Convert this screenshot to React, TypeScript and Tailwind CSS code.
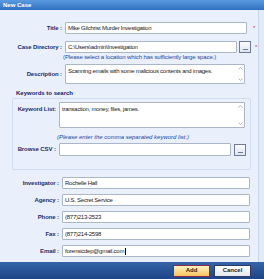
import React from 'react';

const label = 'text-right font-bold text-[6px] text-[#1c2d6e] pr-[2px] tracking-[-0.1px]';
const box = 'bg-white border border-[#a9b7c9] rounded-[1px] text-[6px] text-[#222] px-[2px] flex items-center tracking-[-0.25px]';

function Dots({ cls }: { cls: string }) {
  return (
    <div className={`${cls} w-[12px] h-[12px] bg-gradient-to-b from-[#fbfcfe] to-[#dde5f0] border border-[#6d7c94] flex items-end justify-center pb-[2px]`}>
      <span className="block w-[5px] h-px bg-[#6d7c94]" />
    </div>
  );
}

function Scroll() {
  return (
    <div className="w-[7px] self-stretch flex flex-col justify-between items-center py-[2px] text-[#9aa6b8]">
      <svg width="5" height="3" viewBox="0 0 5 3"><path d="M0.5 2.5 L2.5 0.5 L4.5 2.5" fill="none" stroke="currentColor" strokeWidth="0.8" /></svg>
      <svg width="5" height="3" viewBox="0 0 5 3"><path d="M0.5 0.5 L2.5 2.5 L4.5 0.5" fill="none" stroke="currentColor" strokeWidth="0.8" /></svg>
    </div>
  );
}

function Row({ name, value, active }: { name: string; value: string; active?: boolean }) {
  return (
    <div className="flex items-center h-[12px]">
      <div className={`${label} w-[61px]`}>{name}</div>
      <div className={`${box} ml-[1px] w-[188px] h-[12px] ${active ? 'border-[#3f83d6]' : ''}`}>
        {value}
        {active && <span className="inline-block w-px h-[7px] bg-black ml-px" />}
      </div>
    </div>
  );
}

export default function App() {
  return (
    <div className="w-[264px] h-[279px] flex flex-col overflow-hidden bg-[#e9f0fb]" style={{ fontFamily: "'Liberation Sans', Arial, sans-serif" }}>
      <div className="h-[10px] bg-gradient-to-b from-[#5b9be0] to-[#2f6fc0] text-white font-bold text-[6px] flex items-center px-[3px]">New Case</div>

      <div className="flex-1 flex">
        <div className="w-[258px] flex flex-col">
          {/* Title */}
          <div className="flex items-center h-[12px] mt-[12px]">
            <div className={`${label} w-[64px]`}>Title :</div>
            <div className={`${box} ml-[1px] w-[182px] h-[12px]`}>Mike Gilchrist Murder Investigation</div>
            <span className="ml-[6px] text-[#d0343a] text-[6px]">*</span>
          </div>

          {/* Case Directory */}
          <div className="flex items-center h-[12px] mt-[7px]">
            <div className={`${label} w-[64px]`}>Case Directory :</div>
            <div className={`${box} ml-[1px] w-[172px] h-[12px]`}>C:\Users\admin\Investigation</div>
            <Dots cls="ml-[2px]" />
            <span className="ml-[4px] text-[#d0343a] text-[6px]">*</span>
          </div>
          <div className="h-[8px] pl-[63px] text-[6px] text-[#2246a6] leading-[8px] tracking-[-0.1px]">(Please select a location which has sufficiently large space.)</div>

          {/* Description */}
          <div className="flex items-center h-[20px] mt-[3px]">
            <div className={`${label} w-[64px]`}>Description :</div>
            <div className="ml-[1px] w-[180px] h-[20px] bg-white border border-[#a9b7c9] rounded-[1px] flex text-[6px] text-[#222] tracking-[-0.25px]">
              <div className="flex-1 px-[2px] pt-[2px]">Scanning emails with some malicious contents and images.</div>
              <Scroll />
            </div>
          </div>

          <div className="h-[8px] mt-[5px] pl-[16px] text-[6px] font-bold text-[#13206a] leading-[8px]">Keywords to search</div>

          {/* Group */}
          <div className="ml-[12px] w-[239px] mt-[1px] border border-[#cfdbee] rounded-[2px] pt-[3px] pb-[13px] pr-[4px]">
            <div className="flex items-start h-[26px]">
              <div className={`${label} w-[45px] mt-[3px]`}>Keyword List:</div>
              <div className="ml-[1px] w-[186px] h-[26px] bg-white border border-[#a9b7c9] rounded-[1px] flex text-[6px] text-[#222] tracking-[-0.25px]">
                <div className="flex-1 px-[2px] pt-[2px]">transaction, money, files, james.</div>
                <Scroll />
              </div>
            </div>
            <div className="h-[8px] mt-[5px] pl-[44px] text-[6px] italic text-[#2246a6] leading-[8px]">(Please enter the comma separated keyword list.)</div>
            <div className="flex items-center h-[13px] mt-[2px]">
              <div className={`${label} w-[45px]`}>Browse CSV :</div>
              <div className={`${box} ml-[1px] w-[173px] h-[13px]`} />
              <Dots cls="ml-[3px]" />
            </div>
          </div>

          {/* Contact rows */}
          <div className="flex flex-col gap-[5px] mt-[7px]">
            <Row name="Investigator :" value="Rochelle Hall" />
            <Row name="Agency :" value="U.S. Secret Service" />
            <Row name="Phone :" value="(877)213-2523" />
            <Row name="Fax :" value="(877)214-2598" />
            <Row name="Email :" value="forensicdep@gmail.com" active />
          </div>
        </div>
        <div className="flex-1 border-l border-[#c9d7ed] bg-[#e1eaf7]" />
      </div>

      {/* Bottom bar */}
      <div className="h-[17px] bg-gradient-to-b from-[#3464a8] to-[#1d4587] flex items-center justify-end gap-[4px] pr-[13px]">
        <button className="w-[37px] h-[12px] bg-gradient-to-b from-[#fff2bf] to-[#f5c35a] border border-[#8a2a4a] text-[6px] font-bold text-[#1c1c1c]">Add</button>
        <button className="w-[37px] h-[12px] bg-gradient-to-b from-[#ffffff] to-[#e4e8ee] border border-[#2b3a66] text-[6px] font-bold text-[#1c1c1c]">Cancel</button>
      </div>
    </div>
  );
}
